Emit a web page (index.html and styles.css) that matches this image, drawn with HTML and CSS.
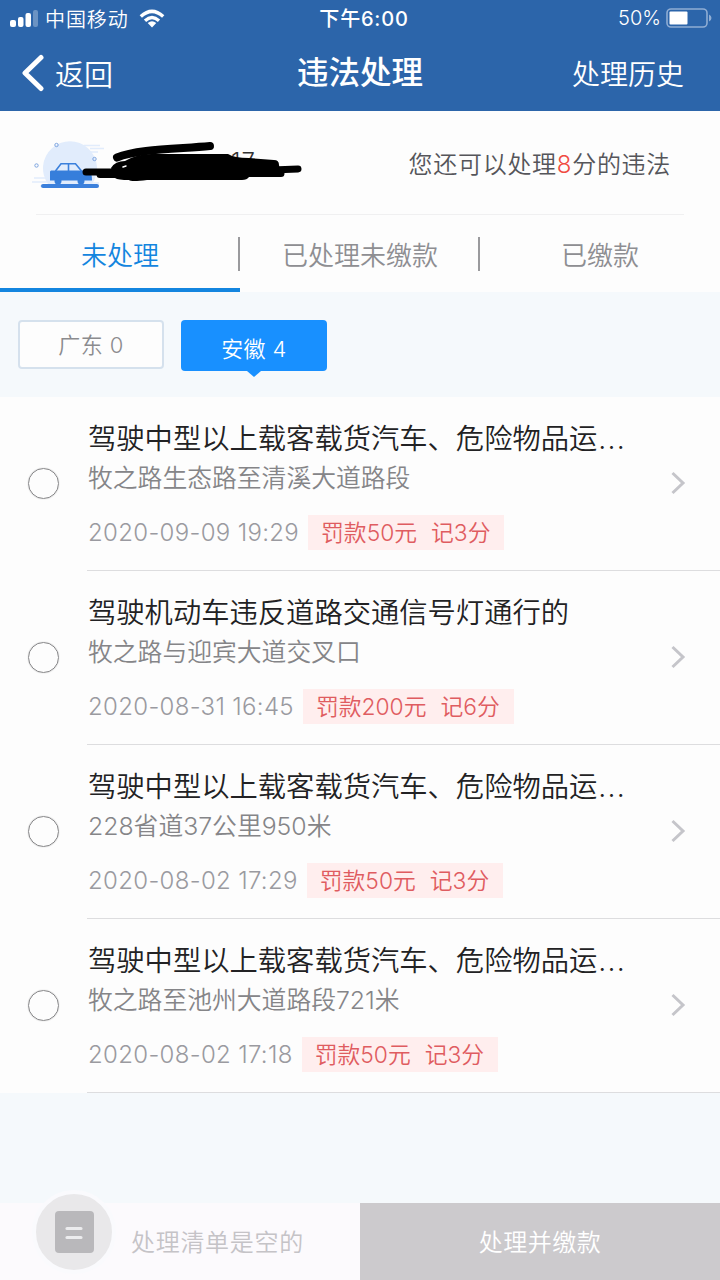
FILE: index.html
```html
<!DOCTYPE html>
<html lang="zh-CN">

<head>
    <meta charset="utf-8">
    <title>违法处理</title>
    <link rel="stylesheet" href="styles.css">
</head>

<body>
    <header class="header">
        <div class="status">
            <div class="status_left">
                <svg width="29" height="18" viewBox="0 0 29 18" fill="#fff">
                    <rect x="0" y="11" width="6" height="7" rx="2" />
                    <rect x="8" y="8" width="5.5" height="10" rx="2" />
                    <rect x="15.5" y="4" width="5.5" height="14" rx="2" />
                    <rect x="23" y="1" width="5" height="17" rx="2" opacity=".3" />
                </svg>
                <span class="carrier">中国移动</span>
                <svg class="wifi" width="26" height="19" viewBox="0 0 26 19" fill="none" stroke="#fff" stroke-width="3.4">
                    <path d="M1.8 7.5Q13 -2.8 24.2 7.5" />
                    <path d="M6 11.7Q13 5.4 20 11.7" />
                    <path d="M8.7 14.1Q13 10.2 17.3 14.1L13 18.4Z" fill="#fff" stroke="none" />
                </svg>
            </div>
            <div class="clock">下午6:00</div>
            <div class="status_right">
                <span>50%</span>
                <svg width="46" height="20" viewBox="0 0 46 20">
                    <rect x="1" y="1" width="40" height="18" rx="4" fill="none" stroke="#8fadd4" stroke-width="1.6" />
                    <rect x="3.5" y="3.5" width="18" height="13" rx="1" fill="#fff" />
                    <path d="M43 6.5q2.5 1 2.5 3.5t-2.5 3.5z" fill="#8fadd4" />
                </svg>
            </div>
        </div>
        <nav class="nav">
            <div class="back">
                <svg width="24" height="38" viewBox="0 0 24 38" fill="none" stroke="#fff" stroke-width="5" stroke-linecap="round" stroke-linejoin="round">
                    <path d="M20 3.5L4 19L20 34.5" />
                </svg>
                <span>返回</span>
            </div>
            <h1 class="title">违法处理</h1>
            <div class="history">处理历史</div>
        </nav>
    </header>

    <section class="summary">
        <svg class="vehicle" width="274" height="60" viewBox="0 0 274 60">
            <path d="M16 44A27 27 0 1 1 60 44Z" fill="#e1ecfc" />
            <path d="M52 5.5h16M58 8.5h14M54 12h12M2 38h14M0 42h18M8 46h12M55 43h12" stroke="#e1ecfc" stroke-width="1.5" />
            <g fill="none" stroke="#7ea5e0" stroke-width="1">
                <circle cx="24.5" cy="5" r="1.7" />
                <circle cx="4.5" cy="25.5" r="1.7" />
                <circle cx="62.5" cy="19" r="1.7" />
            </g>
            <path d="M23.5 31l5.500-7.300h14.500l6 7.300M36.500 24v7" fill="none" stroke="#3b80dc" stroke-width="1.6" />
            <path d="M19 30.500h37q4 1 4 10H18v-9z" fill="#367edb" />
            <circle cx="26" cy="41" r="3.500" fill="#367edb" />
            <circle cx="49" cy="41" r="3.500" fill="#367edb" />
            <rect x="9" y="44" width="58" height="4" rx="2" fill="#3b80dc" />
            <text class="plate" x="199" y="30">17</text>
            <g fill="none" stroke="#000" stroke-linecap="round" stroke-linejoin="round">
                <path d="M85 17.5C105 9 145 9 178 6" stroke-width="8" />
                <path d="M54 32H85L105 30H240L266 29" stroke-width="7" />
                <path d="M68 34.5H100M218 33.5H249" stroke-width="7" />
            </g>
            <path d="M79 28Q83 21 93 21Q106 13 123 14L196 14Q202 18 217 18L242 20Q247 20 247 25L249 35Q249 37 245 37L217 37Q215 40 210 40L115 40Q99 42 97 40Q86 40 83 38Z" />
            <path d="M91 27l3-1" stroke="#fff" stroke-width="1.5" stroke-linecap="round" />
        </svg>
        <p class="quota">您还可以处理<span class="quota_num">8</span>分的违法</p>
    </section>

    <div class="tabs">
        <div class="tab tab_active">未处理</div>
        <div class="tab">已处理未缴款</div>
        <div class="tab">已缴款</div>
    </div>

    <div class="regions">
        <div class="region">广东 0</div>
        <div class="region region_active">安徽 4</div>
    </div>

    <ul class="list">
        <li class="item">
            <span class="radio"></span>
            <div class="item_body">
                <h2 class="item_title">驾驶中型以上载客载货汽车、危险物品运<span class="dots">...</span></h2>
                <p class="item_place">牧之路生态路至清溪大道路段</p>
                <div class="item_meta">
                    <span class="item_time">2020-09-09 19:29</span>
                    <span class="penalty"><span>罚款50元</span><span>记3分</span></span>
                </div>
                <svg class="arrow" width="16" height="24" viewBox="0 0 16 24"><path d="M2.5 2L13 12L2.5 22" /></svg>
            </div>
        </li>
        <li class="item">
            <span class="radio"></span>
            <div class="item_body">
                <h2 class="item_title">驾驶机动车违反道路交通信号灯通行的</h2>
                <p class="item_place">牧之路与迎宾大道交叉口</p>
                <div class="item_meta">
                    <span class="item_time">2020-08-31 16:45</span>
                    <span class="penalty"><span>罚款200元</span><span>记6分</span></span>
                </div>
                <svg class="arrow" width="16" height="24" viewBox="0 0 16 24"><path d="M2.5 2L13 12L2.5 22" /></svg>
            </div>
        </li>
        <li class="item">
            <span class="radio"></span>
            <div class="item_body">
                <h2 class="item_title">驾驶中型以上载客载货汽车、危险物品运<span class="dots">...</span></h2>
                <p class="item_place">228省道37公里950米</p>
                <div class="item_meta">
                    <span class="item_time">2020-08-02 17:29</span>
                    <span class="penalty"><span>罚款50元</span><span>记3分</span></span>
                </div>
                <svg class="arrow" width="16" height="24" viewBox="0 0 16 24"><path d="M2.5 2L13 12L2.5 22" /></svg>
            </div>
        </li>
        <li class="item">
            <span class="radio"></span>
            <div class="item_body">
                <h2 class="item_title">驾驶中型以上载客载货汽车、危险物品运<span class="dots">...</span></h2>
                <p class="item_place">牧之路至池州大道路段721米</p>
                <div class="item_meta">
                    <span class="item_time">2020-08-02 17:18</span>
                    <span class="penalty"><span>罚款50元</span><span>记3分</span></span>
                </div>
                <svg class="arrow" width="16" height="24" viewBox="0 0 16 24"><path d="M2.5 2L13 12L2.5 22" /></svg>
            </div>
        </li>
    </ul>

    <footer class="footer">
        <div class="cart">
            <div class="cart_icon">
                <svg width="39" height="42" viewBox="0 0 39 42">
                    <rect width="39" height="42" rx="4" fill="#b9b8bb" />
                    <path d="M12 17.5h14M12 26.5h14" stroke="#ececee" stroke-width="3.2" stroke-linecap="round" />
                </svg>
            </div>
            <span class="cart_text">处理清单是空的</span>
        </div>
        <div class="pay_button">处理并缴款</div>
    </footer>
</body>

</html>
```
FILE: styles.css
```css
* {
    box-sizing: border-box;
}

body {
    margin: 0;
    width: 720px;
    height: 1280px;
    display: flex;
    flex-direction: column;
    overflow: hidden;
    background: #f5f9fc;
    font-family: Inter, "Noto Sans CJK SC", sans-serif;
    font-weight: 350;
}

h1, h2, p, ul {
    margin: 0;
    padding: 0;
    font-weight: inherit;
}

.header {
    height: 111px;
    background: #2c65aa;
    color: #fff;
}

.status {
    height: 36px;
    display: grid;
    grid-template-columns: 1fr auto 1fr;
    align-items: center;
    padding: 0 8px 0 10px;
    font-size: 20px;
}

.status_left, .status_right {
    display: flex;
    align-items: center;
}

.carrier {
    margin-left: 6px;
    letter-spacing: 0.9px;
}

.wifi {
    margin-left: 10px;
}

.clock {
    letter-spacing: 0.8px;
    padding: 0 0 2px 6px;
    font-weight: 450;
}

.status_right {
    justify-content: flex-end;
    gap: 5px;
}

.nav {
    height: 74px;
    display: grid;
    grid-template-columns: 1fr auto 1fr;
    align-items: center;
    padding: 0 36px 0 21px;
    font-size: 28px;
}

.back {
    display: flex;
    align-items: center;
    gap: 10px;
    font-size: 29px;
}

.title {
    font-size: 31.5px;
    line-height: 40px;
    font-weight: 500;
    padding-left: 15px;
}

.history {
    text-align: right;
}

.summary {
    height: 104px;
    margin: 0 36px;
    padding: 0 13px 0 0;
    border-bottom: 1px solid #f0f0f1;
    display: flex;
    justify-content: space-between;
    align-items: center;
}

body::before {
    content: "";
    position: absolute;
    z-index: -1;
    top: 111px;
    width: 720px;
    height: 181px;
    background: #fdfdfd;
}

.vehicle {
    margin: 14px 0 0 -4px;
}

.plate {
    font-size: 24px;
    letter-spacing: 1px;
    fill: #333;
}

.quota {
    font-size: 24px;
    letter-spacing: 0.7px;
    color: #55555a;
}

.quota_num {
    color: #f04b42;
}

.tabs {
    height: 77px;
    display: flex;
}

.tab {
    flex: 1;
    height: 77px;
    display: flex;
    justify-content: center;
    align-items: center;
    position: relative;
    color: #8e8e92;
    font-size: 26px;
    border-bottom: 4px solid transparent;
    padding-top: 3px;
}

.tab + .tab::before {
    content: "";
    position: absolute;
    left: -2px;
    top: 22px;
    width: 2px;
    height: 34px;
    background: #9a9a9d;
}

.tab_active {
    color: #1385df;
    border-bottom-color: #1385df;
}

.regions {
    height: 105px;
    display: flex;
    gap: 17px;
    padding: 28px 18px 0;
    font-size: 22px;
}

.region {
    width: 146px;
    height: 49px;
    display: flex;
    justify-content: center;
    align-items: center;
    border: 2px solid #d5e1ed;
    border-radius: 4px;
    padding-bottom: 3px;
    background: #fdfdfd;
    color: #8b8b8e;
    letter-spacing: 0.4px;
}

.region_active {
    position: relative;
    height: 51px;
    border: none;
    padding: 3px 0 0;
    background: #1890ff;
    color: #fff;
}

.region_active::after {
    content: "";
    position: absolute;
    left: 66px;
    top: 51px;
    border: 7px solid transparent;
    border-top: 6px solid #1890ff;
    border-bottom: none;
}

.list {
    list-style: none;
    background: #fdfdfd;
}

.item {
    height: 174px;
    display: flex;
    align-items: center;
}

.radio {
    width: 31px;
    height: 31px;
    margin: 0 28px 2px;
    border: 1.5px solid #88888a;
    box-shadow: 0 0 1px #aaa;
    border-radius: 50%;
}

.item_body {
    flex: 1;
    height: 174px;
    position: relative;
    padding: 22px 0 0 1px;
    border-bottom: 1px solid #dddddf;
}

.item_title {
    font-size: 28.3px;
    line-height: 41px;
    color: #222224;
    white-space: nowrap;
}

.dots {
    margin-left: 1px;
    letter-spacing: 1.2px;
}

.item_place {
    font-size: 24.8px;
    line-height: 36px;
    color: #858588;
}

.item_meta {
    margin-top: 19px;
    display: flex;
    align-items: center;
    gap: 9px;
    font-size: 24px;
    line-height: 35px;
}

.item_time {
    letter-spacing: 0.32px;
    color: #9a9aa0;
}

.penalty {
    display: flex;
    gap: 14px;
    padding: 0 14px 0 13px;
    background: #ffeeee;
    color: #df5c60;
    font-size: 22.8px;
}

.arrow {
    position: absolute;
    right: 34px;
    top: 74px;
    fill: none;
    stroke: #c5c5ca;
    stroke-width: 3;
}

.footer {
    margin-top: auto;
    height: 77px;
    display: flex;
}

.cart {
    width: 360px;
    display: flex;
    background: #fcfafd;
}

.cart_icon {
    width: 84px;
    height: 84px;
    margin: -13px 0 0 32px;
    border: 4px solid #fafafd;
    border-radius: 50%;
    background: #e9e8ea;
    display: flex;
    justify-content: center;
    align-items: center;
}

.cart_text {
    margin: 20px 0 0 15px;
    font-size: 24px;
    letter-spacing: 0.7px;
    color: #c5c3c7;
}

.pay_button {
    width: 360px;
    background: #cccacd;
    color: #fff;
    font-size: 24px;
    text-align: center;
    padding-top: 20px;
    letter-spacing: 0.5px;
}
```
